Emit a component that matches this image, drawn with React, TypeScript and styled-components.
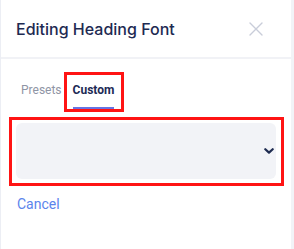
import styled, { createGlobalStyle } from 'styled-components';

const GlobalStyle = createGlobalStyle`
  html, body {
    margin: 0;
    padding: 0;
    background: #f2f3f7;
  }
`;

const Panel = styled.div`
  background: #ffffff;
  border-left: 1px solid #eceef4;
  box-sizing: border-box;
  font-family: Roboto, 'Liberation Sans', sans-serif;
  height: 249px;
  width: 291px;
`;

const Header = styled.header`
  align-items: center;
  border-bottom: 2px solid #f1f2f6;
  box-sizing: border-box;
  display: flex;
  height: 59px;
  justify-content: space-between;
  padding: 0 28px 0 15px;
`;

const Title = styled.h2`
  color: #1e2a52;
  font-family: Inter, 'Noto Sans', sans-serif;
  font-size: 16px;
  font-weight: 500;
  margin: 0;
`;

const CloseButton = styled.button`
  background: none;
  border: 0;
  cursor: pointer;
  display: flex;
  padding: 0;
`;

const Tabs = styled.div`
  align-items: flex-start;
  display: flex;
  gap: 2px;
  margin-top: 13px;
  padding-left: 20px;
`;

// the marked tab carries the red highlight frame
const Tab = styled.div<{ $marked?: boolean }>`
  border-color: ${(p) => (p.$marked ? '#ff1414' : 'transparent')};
  border-style: solid;
  border-width: ${(p) => (p.$marked ? '3px' : '3px 0')};
  display: flex;
  padding: ${(p) => (p.$marked ? '8px 7px 0 6px' : '8px 0 0 0')};
`;

const TabLabel = styled.span<{ $active?: boolean }>`
  border-bottom: 2px solid ${(p) => (p.$active ? '#6674e4' : 'transparent')};
  color: ${(p) => (p.$active ? '#1c2a55' : '#8f95a5')};
  font-size: 12px;
  font-weight: ${(p) => (p.$active ? 700 : 400)};
  line-height: 14px;
  padding-bottom: 10px;
`;

const SelectFrame = styled.div`
  border: 3px solid #ff1414;
  box-sizing: border-box;
  margin: 5px 0 0 8px;
  padding: 3px 5px 4px 4px;
  width: 275px;
`;

const Select = styled.div`
  align-items: center;
  background: #f2f3f7;
  border-radius: 6px;
  display: flex;
  height: 56px;
  justify-content: flex-end;
  padding-right: 2px;
`;

const CancelLink = styled.a`
  color: #5b84ec;
  cursor: pointer;
  display: block;
  font-size: 14px;
  line-height: 20px;
  margin: 8px 0 0 16px;
`;

const App = () => {
  return (
    <>
      <GlobalStyle />
      <Panel>
        <Header>
          <Title>Editing Heading Font</Title>
          <CloseButton aria-label="Close">
            <svg width="14" height="14" viewBox="0 0 14 14">
              <path
                d="M1 1 L13 13 M13 1 L1 13"
                stroke="#c9cdd9"
                strokeWidth="1.4"
                strokeLinecap="round"
              />
            </svg>
          </CloseButton>
        </Header>

        <Tabs>
          <Tab>
            <TabLabel>Presets</TabLabel>
          </Tab>
          <Tab $marked>
            <TabLabel $active>Custom</TabLabel>
          </Tab>
        </Tabs>

        <SelectFrame>
          <Select>
            <svg width="10" height="6" viewBox="0 0 10 6">
              <path
                d="M1.3 1.2 L5 4.6 L8.7 1.2"
                fill="none"
                stroke="#1e2b50"
                strokeWidth="2.2"
                strokeLinecap="round"
                strokeLinejoin="round"
              />
            </svg>
          </Select>
        </SelectFrame>

        <CancelLink>Cancel</CancelLink>
      </Panel>
    </>
  );
};

export default App;
